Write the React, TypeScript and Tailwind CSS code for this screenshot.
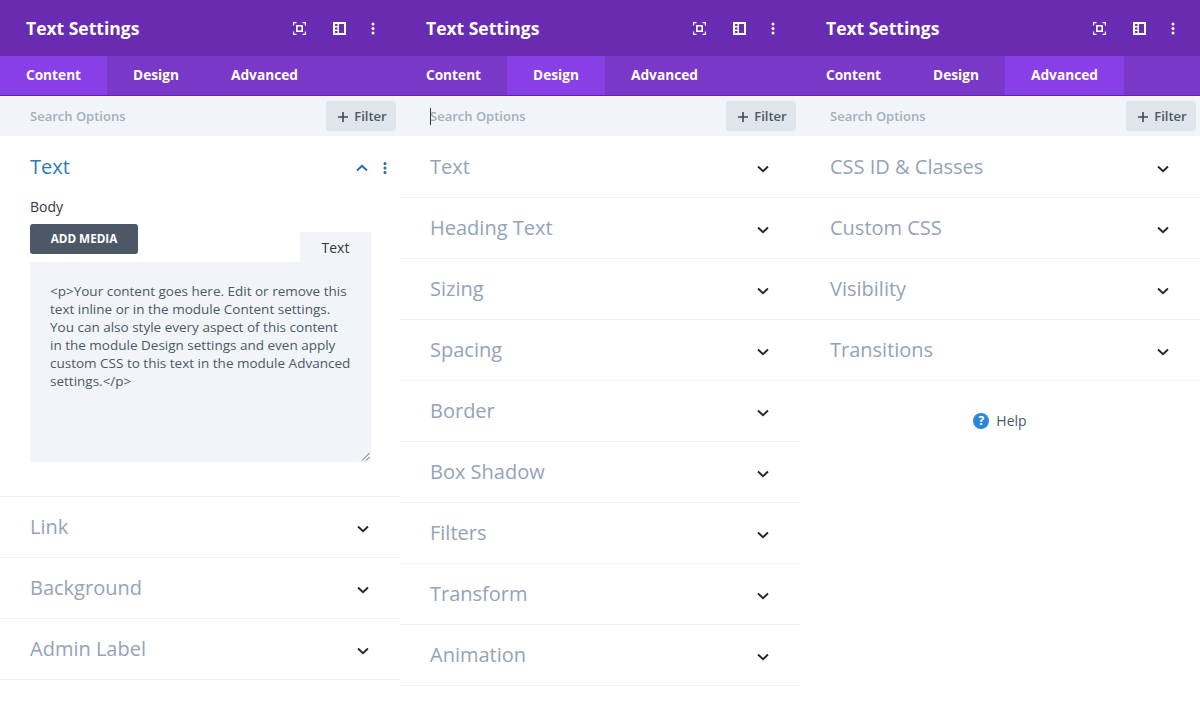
import React from 'react';

const contentRows = ['Link', 'Background', 'Admin Label'];
const designRows = ['Text', 'Heading Text', 'Sizing', 'Spacing', 'Border', 'Box Shadow', 'Filters', 'Transform', 'Animation'];
const advancedRows = ['CSS ID & Classes', 'Custom CSS', 'Visibility', 'Transitions'];
const tabs = ['Content', 'Design', 'Advanced'];
const tabWidths = ['w-[107px]', 'w-[98px]', 'w-[119px]'];
const bodyText =
    '<p>Your content goes here. Edit or remove this text inline or in the module Content settings. You can also style every aspect of this content in the module Design settings and even apply custom CSS to this text in the module Advanced settings.</p>';

function Chevron({ up = false, color = '#20272f' }: { up?: boolean; color?: string }) {
    return (
        <svg width="12" height="8" viewBox="0 0 12 8" fill="none">
            <path d={up ? 'M1 6.5 6 1.8l5 4.7' : 'M1 1.5 6 6.2l5-4.7'} stroke={color} strokeWidth="1.9" />
        </svg>
    );
}

function Row({ label }: { label: string }) {
    return (
        <div className="h-[61px] shrink-0 flex items-center justify-between pl-[30px] pr-[31px] border-b border-[#f1f3f6]">
            <span className="text-[20px] text-[#94a3b8]">{label}</span>
            <span className="pt-[3px]">
                <Chevron />
            </span>
        </div>
    );
}

function Panel({ active, caret, children }: { active: number; caret?: boolean; children: React.ReactNode }) {
    return (
        <div className="w-[400px] h-[702px] bg-white flex flex-col">
            <div className="h-[56px] shrink-0 bg-[#6a2bb3] flex items-center pl-[26px] pr-[25px]">
                <span className="text-[17.5px] font-bold text-white flex-1">Text Settings</span>
                <div className="flex items-center gap-[25px]">
                    <svg className="mr-[2px]" width="13" height="13" viewBox="0 0 13 13" fill="none" stroke="#fff" strokeWidth="1.2">
                        <path d="M.6 3.5V.6h2.9M9.5.6h2.9v2.9M12.4 9.5v2.9H9.5M3.5 12.4H.6V9.5" />
                        <rect x="3.8" y="3.8" width="5.4" height="5.4" strokeWidth="1.6" />
                    </svg>
                    <svg width="13" height="13" viewBox="0 0 13 13">
                        <path fill="#fff" fillRule="evenodd" d="M0 0h13v13H0zM6 2v9h5V2zM2 2v2h2.500V2zM2 5.500v2h2.500v-2zM2 9v2h2.500V9z" />
                    </svg>
                    <svg width="4" height="13" viewBox="0 0 4 13" fill="#fff">
                        <circle cx="2" cy="2" r="1.500" />
                        <circle cx="2" cy="6.500" r="1.500" />
                        <circle cx="2" cy="11" r="1.500" />
                    </svg>
                </div>
            </div>
            <div className="h-[40px] shrink-0 bg-[#7a38c9] border-b border-[#5f249f] flex">
                {tabs.map((tab, i) => (
                    <div
                        key={tab}
                        className={`${tabWidths[i]} flex items-center justify-center text-[13.7px] font-bold text-white ${i === active ? 'bg-[#883fe6]' : ''}`}
                    >
                        {tab}
                    </div>
                ))}
            </div>
            <div className="h-[40px] shrink-0 bg-[#f1f5f9] flex items-center justify-between pl-[30px] pr-[4px]">
                <span className="relative top-[1px] text-[13px] font-semibold text-[#a3afbe]">
                    {caret && <span className="absolute left-0 top-[1px] w-px h-[17px] bg-[#2b3240]" />}
                    Search Options
                </span>
                <div className="w-[70px] h-[30px] rounded-[3px] bg-[#e0e5eb] flex items-center justify-center gap-[6px] pl-[3px] pt-[1px] text-[13px] font-semibold text-[#4c5866]">
                    <svg width="10" height="10" viewBox="0 0 10 10" fill="#3e4956">
                        <path d="M4.200 0h1.600v4.200H10v1.600H5.800V10H4.200V5.800H0V4.200h4.200z" />
                    </svg>
                    Filter
                </div>
            </div>
            <div className="mt-[1px] flex flex-col">{children}</div>
        </div>
    );
}

export default function App() {
    return (
        <div className="flex w-[1200px] h-[702px] overflow-hidden bg-white font-['Open_Sans',sans-serif]">
            <Panel active={0}>
                <div className="h-[360px] shrink-0 border-b border-[#f1f3f6] pl-[30px] pr-[29px]">
                    <div className="h-[59px] flex items-center justify-between">
                        <span className="text-[20px] text-[#2b7bb9]">Text</span>
                        <div className="flex items-center gap-[15px] mr-[-16px] pt-[2px]">
                            <Chevron up color="#2a6aa5" />
                            <svg width="4" height="12" viewBox="0 0 4 12" fill="#2a6aa5">
                                <circle cx="2" cy="1.600" r="1.500" />
                                <circle cx="2" cy="6" r="1.500" />
                                <circle cx="2" cy="10.400" r="1.500" />
                            </svg>
                        </div>
                    </div>
                    <div className="text-[14px] leading-[22px] text-[#32373c]">Body</div>
                    <div className="flex items-start justify-between h-[38px] mt-[6px]">
                        <div className="w-[108px] h-[30px] rounded-[3px] bg-[#4c5866] flex items-center justify-center text-[11.7px] font-bold text-white">
                            ADD MEDIA
                        </div>
                        <div className="w-[71px] h-[30px] mt-[8px] bg-[#f1f5f9] flex items-center justify-center text-[14px] text-[#32373c]">
                            Text
                        </div>
                    </div>
                    <div className="relative h-[200px] bg-[#f1f5f9] px-[20px] pt-[20px] text-[13.5px] leading-[18px] text-[#4c5866]">
                        {bodyText}
                        <svg className="absolute right-[1px] bottom-[1px]" width="9" height="9" viewBox="0 0 9 9" stroke="#4c5866" strokeWidth="0.9">
                            <path d="M1 8.500 8.500 1M5 8.500 8.500 5" />
                        </svg>
                    </div>
                </div>
                {contentRows.map((r) => <Row key={r} label={r} />)}
            </Panel>
            <Panel active={1} caret>
                {designRows.map((r) => <Row key={r} label={r} />)}
            </Panel>
            <Panel active={2}>
                {advancedRows.map((r) => <Row key={r} label={r} />)}
                <div className="flex items-center justify-center gap-[7px] mt-[29px] text-[14px] text-[#4c5866]">
                    <span className="w-[16px] h-[16px] rounded-full bg-[#2b87da] flex items-center justify-center text-[12px] font-bold text-white">?</span>
                    Help
                </div>
            </Panel>
        </div>
    );
}
